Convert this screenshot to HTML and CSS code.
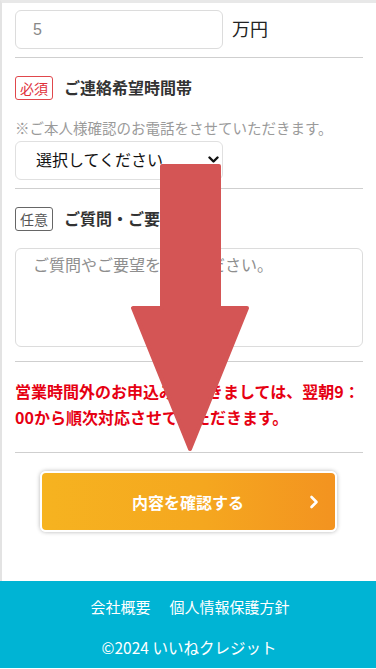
FILE: index.html
```html
<!DOCTYPE html>
<html lang="ja">
<head>
<meta charset="utf-8">
<meta name="viewport" content="width=device-width, initial-scale=1">
<title>お申込みフォーム</title>
<link rel="stylesheet" href="styles.css">
</head>
<body>
<div class="page">
  <div class="amount-row">
    <input class="text-input" type="text" placeholder="5">
    <span class="unit">万円</span>
  </div>
  <hr class="sep">

  <div class="field-head">
    <span class="badge badge-req">必須</span>
    <span class="field-label">ご連絡希望時間帯</span>
  </div>
  <p class="note">※ご本人様確認のお電話をさせていただきます。</p>
  <div class="select-wrap">
    <select class="select">
      <option>選択してください</option>
    </select>
    <svg class="select-chev" width="11" height="8" viewBox="0 0 11 8"><polyline points="1.5,1.5 5.5,5.5 9.5,1.5" fill="none" stroke="#111" stroke-width="2.4" stroke-linecap="round" stroke-linejoin="round"/></svg>
  </div>
  <hr class="sep">

  <div class="field-head head2">
    <span class="badge badge-opt">任意</span>
    <span class="field-label">ご質問・ご要望</span>
  </div>
  <textarea class="textarea" placeholder="ご質問やご要望を入力ください。"></textarea>
  <hr class="sep sep3">

  <p class="warn">営業時間外のお申込みにつきましては、翌朝9：00から順次対応させていただきます。</p>
  <hr class="sep sep4">

  <div class="btn-row">
    <button class="confirm" type="button">
      <span class="confirm-text">内容を確認する</span>
      <svg class="confirm-chev" width="10" height="14" viewBox="0 0 10 14"><polyline points="2.5,2 7.5,7 2.5,12" fill="none" stroke="#fff" stroke-width="2.6" stroke-linecap="round" stroke-linejoin="round"/></svg>
    </button>
  </div>
</div>

<footer class="footer">
  <nav class="footer-links">
    <a href="#">会社概要</a>
    <a href="#">個人情報保護方針</a>
  </nav>
  <p class="copy">©2024 いいねクレジット</p>
</footer>

<svg class="arrow" width="376" height="669" viewBox="0 0 376 669">
  <polygon points="162,166 219,166 219,308 247,308 190,449 133,308 162,308" fill="#d45555" stroke="#d45555" stroke-width="4" stroke-linejoin="round"/>
</svg>
</body>
</html>
```

FILE: styles.css
```css
* { box-sizing: border-box; }

html, body {
  margin: 0;
  padding: 0;
  background: #fff;
}

body {
  position: relative;
  width: 376px;
  min-height: 669px;
  font-family: "Noto Sans CJK JP", "Noto Sans", sans-serif;
  color: #333;
}

.page {
  border-top: 3px solid #e8e8e8;
  border-left: 2px solid #e3e3e3;
  padding: 7px 13px 49px 13px;
}

.amount-row {
  display: flex;
  align-items: center;
  gap: 9px;
}

.text-input {
  width: 208px;
  height: 39px;
  border: 1px solid #dcdcdc;
  border-radius: 6px;
  padding: 0 17px;
  font-family: "Liberation Sans", "Noto Sans CJK JP", sans-serif;
  font-size: 16px;
  color: #333;
  outline: none;
}
.text-input::placeholder { color: #888; }

.unit {
  font-size: 18px;
  color: #222;
  line-height: 1;
  margin-top: -4px;
}

.sep {
  border: 0;
  border-top: 1px solid #cfcfcf;
  margin: 8px 0 0;
  height: 0;
}
.sep3 { margin-top: 14px; }
.sep4 { margin-top: 22px; }

.field-head {
  display: flex;
  align-items: center;
  gap: 11px;
  margin-top: 18px;
}
.head2 { margin-top: 18px; }

.badge {
  display: inline-flex;
  align-items: center;
  justify-content: center;
  width: 38px;
  height: 24px;
  border-radius: 3px;
  font-size: 14px;
  line-height: 1;
  background: #fff;
}
.badge-req {
  border: 1px solid #e0474c;
  color: #e0303a;
}
.badge-opt {
  border: 1px solid #666;
  color: #555;
}

.field-label {
  font-size: 16px;
  font-weight: bold;
  color: #333;
  margin-top: -3px;
}

.note {
  margin: 18px 0 0;
  font-size: 14.5px;
  line-height: 20px;
  color: #9a9a9a;
  white-space: nowrap;
}

.select-wrap {
  position: relative;
  width: 208px;
  margin-top: 3px;
}
.select {
  appearance: none;
  -webkit-appearance: none;
  width: 208px;
  height: 39px;
  border: 1px solid #e0e0e0;
  border-radius: 6px;
  background: #fff;
  padding: 0 20px 3px;
  font-family: "Noto Sans CJK JP", sans-serif;
  font-size: 16px;
  color: #111;
}
.select-chev {
  position: absolute;
  right: 4px;
  top: 15px;
  pointer-events: none;
}

.textarea {
  display: block;
  width: 100%;
  height: 99px;
  margin-top: 17px;
  border: 1px solid #dcdcdc;
  border-radius: 6px;
  padding: 4px 17px;
  font-family: "Noto Sans CJK JP", sans-serif;
  font-size: 16px;
  line-height: 22px;
  resize: none;
}
.textarea::placeholder { color: #8e8e8e; }

.warn {
  margin: 16px 0 0;
  font-size: 16px;
  font-weight: bold;
  line-height: 26px;
  color: #e60012;
}

.btn-row {
  display: flex;
  justify-content: center;
  margin-top: 18px;
  padding-right: 2px;
}
.confirm {
  position: relative;
  width: 297px;
  height: 61px;
  border: 2px solid #fff;
  border-radius: 6px;
  background: linear-gradient(90deg, #f6b320 0%, #f5a71f 55%, #f39320 100%);
  box-shadow: 0 0 4px rgba(0, 0, 0, 0.3);
  font-family: "Noto Sans CJK JP", sans-serif;
  font-size: 16px;
  font-weight: bold;
  color: #fff;
  padding: 0;
  display: flex;
  align-items: center;
  justify-content: center;
}
.confirm-text { line-height: 1; }
.confirm-chev {
  position: absolute;
  right: 16px;
  top: 22px;
}

.footer {
  background: #00b4d4;
  height: 87px;
  display: flex;
  flex-direction: column;
  align-items: center;
  padding-top: 16px;
}
.footer-links {
  display: flex;
  gap: 19px;
  padding-left: 4px;
}
.footer-links a {
  color: #fff;
  text-decoration: none;
  font-size: 15px;
  line-height: 20px;
}
.copy {
  margin: 20px 0 0;
  padding-left: 2px;
  color: #fff;
  font-size: 15.5px;
  line-height: 20px;
}

.arrow {
  position: absolute;
  left: 0;
  top: 0;
  pointer-events: none;
}
```
